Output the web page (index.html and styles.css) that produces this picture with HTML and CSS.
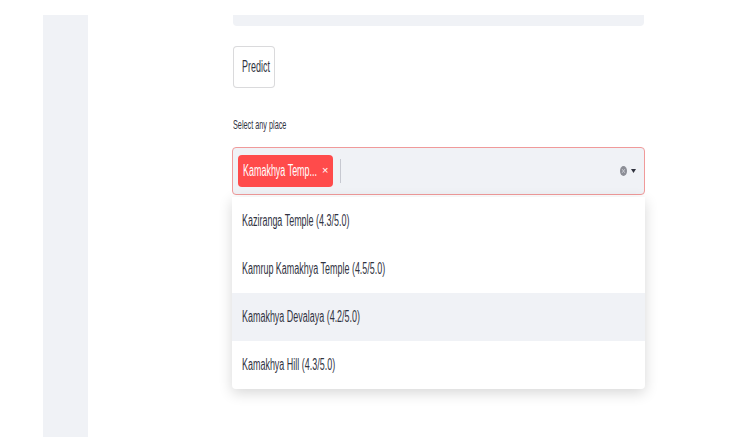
FILE: index.html
```html
<!DOCTYPE html>
<html>
<head>
<meta charset="utf-8">
<link rel="stylesheet" href="styles.css">
</head>
<body>
<div class="page">
  <aside class="sidebar"></aside>
  <main class="main">
    <div class="topbox"></div>
    <button class="btn"><span class="sq">Predict</span></button>
    <div class="label"><span class="sq">Select any place</span></div>
    <div class="select">
      <div class="chip"><span class="sq">Kamakhya Temp...</span><span class="chip-x">×</span></div>
      <div class="cursor"></div>
      <div class="icons">
        <svg class="clear" width="7" height="10" viewBox="0 0 7 10"><ellipse cx="3.5" cy="5" rx="3.5" ry="5" fill="#8c8e96"/><path d="M2.2 3.2 L4.8 6.8 M4.8 3.2 L2.2 6.8" stroke="#c9cbd2" stroke-width="1"/></svg>
        <svg class="caret" width="5" height="4" viewBox="0 0 5 4"><path d="M0 0 H5 L2.5 4 Z" fill="#31333f"/></svg>
      </div>
    </div>
    <ul class="menu">
      <li class="item"><span class="sq">Kaziranga Temple (4.3/5.0)</span></li>
      <li class="item"><span class="sq">Kamrup Kamakhya Temple (4.5/5.0)</span></li>
      <li class="item active"><span class="sq">Kamakhya Devalaya (4.2/5.0)</span></li>
      <li class="item"><span class="sq">Kamakhya Hill (4.3/5.0)</span></li>
    </ul>
  </main>
</div>
</body>
</html>
```
FILE: styles.css
```css
* { box-sizing: border-box; }
html, body { margin: 0; padding: 0; background: #ffffff; }
body {
  width: 737px;
  height: 437px;
  overflow: hidden;
  font-family: "Liberation Sans", Arial, sans-serif;
  color: #31333f;
}
.page {
  display: flex;
  height: 437px;
  padding-top: 15px;
}
.sidebar {
  width: 45px;
  margin-left: 43px;
  background: #f0f2f6;
  flex: none;
}
.main {
  width: 413px;
  margin-left: 144px;
  display: flex;
  flex-direction: column;
  align-items: flex-start;
}
.sq {
  display: inline-block;
  transform: scaleX(0.56);
  transform-origin: left center;
  white-space: nowrap;
}
.topbox {
  width: 411px;
  margin-left: 1px;
  height: 11px;
  background: #f0f2f6;
  border-radius: 0 0 4px 4px;
}
.btn {
  margin-top: 20px;
  margin-left: 1px;
  width: 42px;
  height: 42px;
  padding: 0 0 0 8px;
  text-align: left;
  background: #fff;
  border: 1px solid rgba(49, 51, 63, 0.18);
  border-radius: 4px;
  font-family: "Liberation Sans", Arial, sans-serif;
  font-size: 16px;
  color: #31333f;
  overflow: visible;
}
.label {
  margin-top: 29px;
  margin-left: 1px;
  height: 30px;
  font-size: 13px;
  line-height: 16px;
  width: 100px;
}
.select {
  width: 413px;
  height: 48px;
  background: #f0f2f6;
  border: 1px solid #f09a9a;
  border-radius: 4px;
  display: flex;
  align-items: center;
  padding-left: 5px;
  padding-right: 8px;
}
.chip {
  width: 95px;
  height: 32px;
  background: #ff4b4b;
  border-radius: 4px;
  color: #fff;
  font-size: 16px;
  display: flex;
  align-items: center;
  padding-left: 5px;
  position: relative;
  flex: none;
}
.chip .sq { width: 80px; }
.chip-x {
  position: absolute;
  left: 84px;
  top: 8px;
  font-size: 11px;
  line-height: 14px;
}
.cursor {
  width: 1px;
  height: 24px;
  background: #c7c9d1;
  margin-left: 7px;
}
.icons {
  margin-left: auto;
  display: flex;
  align-items: center;
  gap: 4px;
}
.menu {
  list-style: none;
  margin: 2px 0 0 0;
  padding: 0;
  width: 413px;
  background: #fff;
  box-shadow: 0 4px 14px rgba(0, 0, 0, 0.16);
  border-radius: 0 0 4px 4px;
}
.item {
  height: 48px;
  display: flex;
  align-items: center;
  padding-left: 10px;
  font-size: 16px;
}
.item.active { background: #f0f2f6; }
```
